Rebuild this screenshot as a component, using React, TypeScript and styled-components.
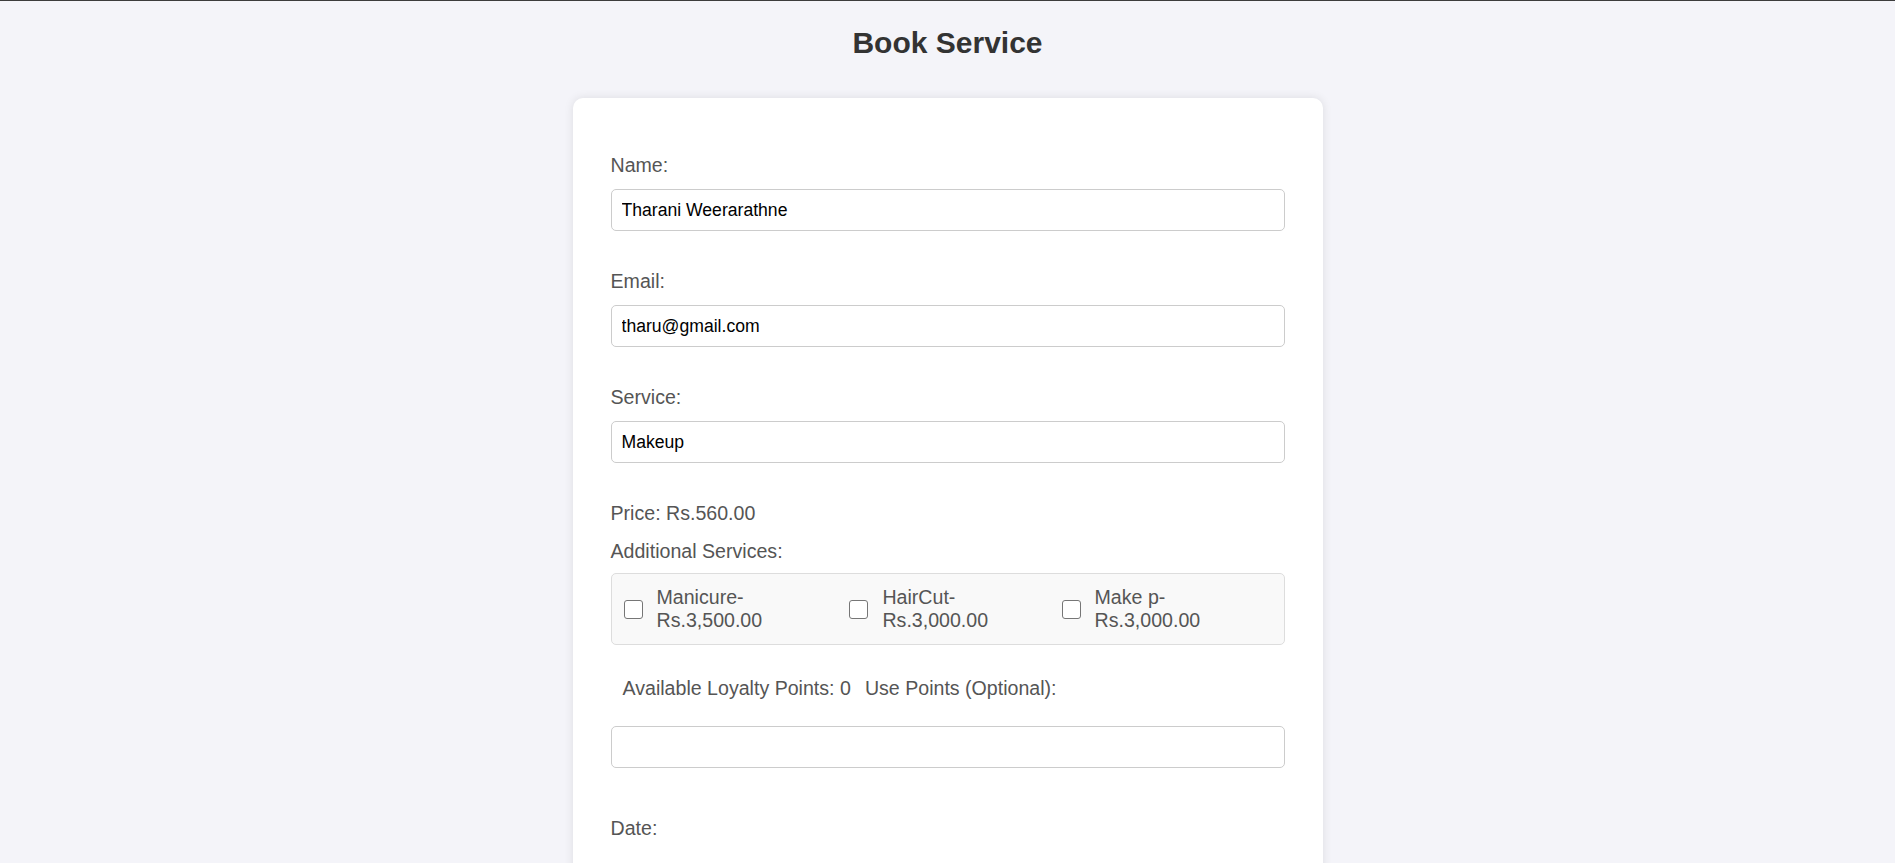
import React from "react";
import styled, { createGlobalStyle } from "styled-components";

const GlobalStyle = createGlobalStyle`
  html { scrollbar-width: none; }
  body {
    margin: 0;
    border-top: 1px solid #3c3c3c;
    background: #f4f4f9;
    font-family: "Liberation Sans", Arial, Helvetica, sans-serif;
  }
  * { box-sizing: border-box; }
`;

const Page = styled.div`
  display: flex;
  flex-direction: column;
  align-items: center;
  padding-bottom: 40px;
`;

const Title = styled.h1`
  margin: 25px 0 0;
  font-size: 30px;
  line-height: 34px;
  font-weight: 700;
  color: #333;
  text-align: center;
`;

const Card = styled.form`
  width: 750px;
  margin-top: 38px;
  padding: 56px 38px 40px;
  background: #fff;
  border-radius: 10px;
  box-shadow: 0 0 10px rgba(0, 0, 0, 0.1);
  display: flex;
  flex-direction: column;
`;

const Field = styled.div`
  display: flex;
  flex-direction: column;
  margin-bottom: 39px;
`;

const Label = styled.label<{ $gap?: number }>`
  display: block;
  font-size: 19.6px;
  line-height: 22px;
  color: #555;
  margin-bottom: ${(p) => (p.$gap ?? 13)}px;
`;

const Text = styled.div<{ $gap?: number }>`
  font-size: 19.6px;
  line-height: 22px;
  color: #555;
  margin-bottom: ${(p) => (p.$gap ?? 0)}px;
`;

const Input = styled.input`
  width: 100%;
  height: 42px;
  padding: 0 10px;
  border: 1px solid #ccc;
  border-radius: 5px;
  font-family: "Liberation Sans", Arial, Helvetica, sans-serif;
  font-size: 17.6px;
  color: #000;
  background: #fff;
  outline: none;
`;

const CheckGroup = styled.div`
  display: flex;
  padding: 12px 12px;
  border: 1px solid #ddd;
  border-radius: 5px;
  background: #f9f9f9;
`;

const CheckItem = styled.label`
  display: flex;
  align-items: center;
  gap: 14px;
  font-size: 19.6px;
  line-height: 23px;
  color: #555;
`;

const Box = styled.input`
  appearance: none;
  -webkit-appearance: none;
  flex: none;
  width: 19px;
  height: 19px;
  margin: 0;
  border: 1px solid #767676;
  border-radius: 3px;
  background: #fff;
`;

const LoyaltyRow = styled.div`
  display: flex;
  gap: 14px;
  padding-left: 12px;
  margin-top: 32px;
  margin-bottom: 27px;
  font-size: 19.6px;
  line-height: 22px;
  color: #555;
`;

const DateField = styled(Field)`
  margin-top: 49px;
  margin-bottom: 0;
`;

const extras = [
  { name: "Manicure-", price: "Rs.3,500.00" },
  { name: "HairCut-", price: "Rs.3,000.00" },
  { name: "Make p-", price: "Rs.3,000.00" },
];

export default function App() {
  return (
    <>
      <GlobalStyle />
      <Page>
        <Title>Book Service</Title>
        <Card onSubmit={(e) => e.preventDefault()}>
          <Field>
            <Label>Name:</Label>
            <Input defaultValue="Tharani Weerarathne" />
          </Field>
          <Field>
            <Label>Email:</Label>
            <Input defaultValue="tharu@gmail.com" />
          </Field>
          <Field>
            <Label>Service:</Label>
            <Input defaultValue="Makeup" />
          </Field>
          <Text $gap={16}>Price: Rs.560.00</Text>
          <Label $gap={11}>Additional Services:</Label>
          <CheckGroup>
            {extras.map((x) => (
              <CheckItem key={x.name}>
                <Box type="checkbox" />
                <span>
                  {x.name} {x.price}
                </span>
              </CheckItem>
            ))}
          </CheckGroup>
          <LoyaltyRow>
            <span>Available Loyalty Points: 0</span>
            <span>Use Points (Optional):</span>
          </LoyaltyRow>
          <Input type="text" />
          <DateField>
            <Label $gap={30}>Date:</Label>
            <Input type="date" />
          </DateField>
        </Card>
      </Page>
    </>
  );
}
